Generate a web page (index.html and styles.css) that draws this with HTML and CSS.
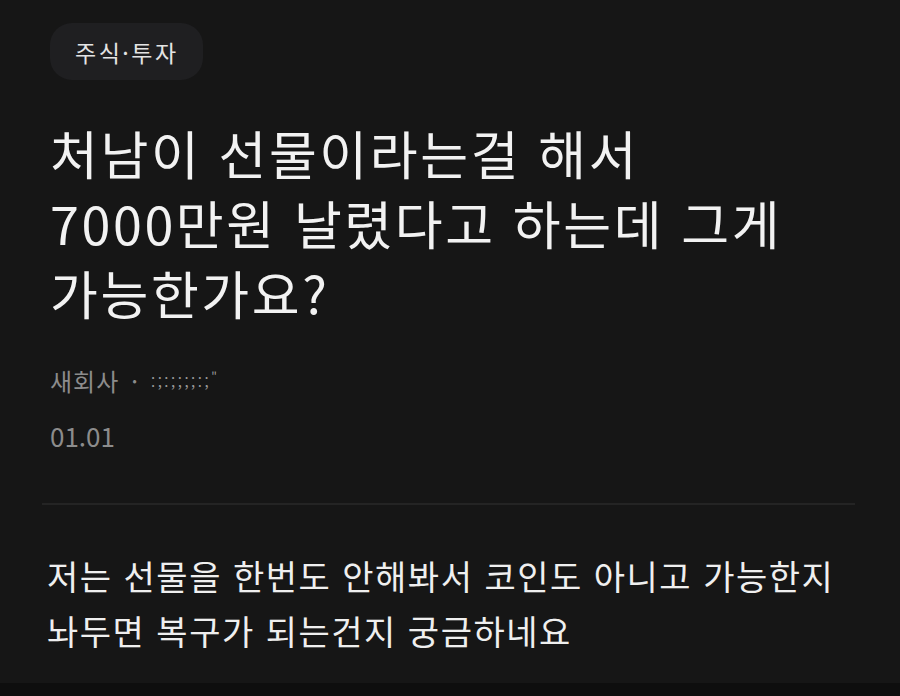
FILE: index.html
```html
<!DOCTYPE html>
<html lang="ko">
<head>
<meta charset="utf-8">
<link rel="stylesheet" href="styles.css">
</head>
<body>
<div class="page">
  <div class="post">
    <div class="head">
      <span class="tag">주식·투자</span>
      <h1 class="title">처남이 선물이라는걸 해서<br>7000만원 날렸다고 하는데 그게<br>가능한가요?</h1>
      <div class="meta"><span>새회사</span><span class="dot">·</span><span class="nick">:;:;;;;:;<sup>"</sup></span></div>
      <div class="date">01.01</div>
    </div>
    <hr class="divider">
    <p class="content">저는 선물을 한번도 안해봐서 코인도 아니고 가능한지<br>놔두면 복구가 되는건지 궁금하네요</p>
  </div>
  <div class="bottom"></div>
</div>
</body>
</html>
```
FILE: styles.css
```css
html, body {
  margin: 0;
  padding: 0;
  background: #161616;
}
.page {
  width: 900px;
  height: 696px;
  display: flex;
  flex-direction: column;
  font-family: "Noto Sans CJK KR", "Noto Sans", sans-serif;
  color: #efefef;
  overflow: hidden;
}
.post {
  flex: 1;
  display: flex;
  flex-direction: column;
}
.head {
  padding: 23px 0 0 50px;
  display: flex;
  flex-direction: column;
  align-items: flex-start;
}
.tag {
  display: inline-flex;
  align-items: center;
  height: 57px;
  padding: 0 24px 0 25px;
  border-radius: 22px;
  background: #1f1f21;
  color: #e4e4e4;
  font-size: 23px;
  letter-spacing: 2.5px;
}
.title {
  margin: 38px 0 0 0;
  font-size: 52px;
  font-weight: 400;
  line-height: 70px;
  letter-spacing: 2.6px;
  color: #f2f2f2;
}
.meta {
  margin-top: 35px;
  height: 34px;
  font-size: 24px;
  letter-spacing: 1px;
  color: #8c8c8c;
  display: flex;
  align-items: center;
  gap: 12px;
}
.nick {
  font-size: 15px;
  letter-spacing: 2.5px;
  color: #9a9a9a;
}
.nick sup {
  font-size: 12px;
}
.date {
  margin-top: 21px;
  line-height: 36px;
  font-size: 26px;
  color: #8c8c8c;
}
.divider {
  margin: 49px 45px 0 42px;
  border: none;
  height: 2px;
  background: #242424;
}
.content {
  margin: 43px 0 0 47px;
  font-size: 34px;
  line-height: 55px;
  letter-spacing: 1.5px;
  color: #efefef;
}
.bottom {
  height: 13px;
  background: #0e0e0e;
}
```
